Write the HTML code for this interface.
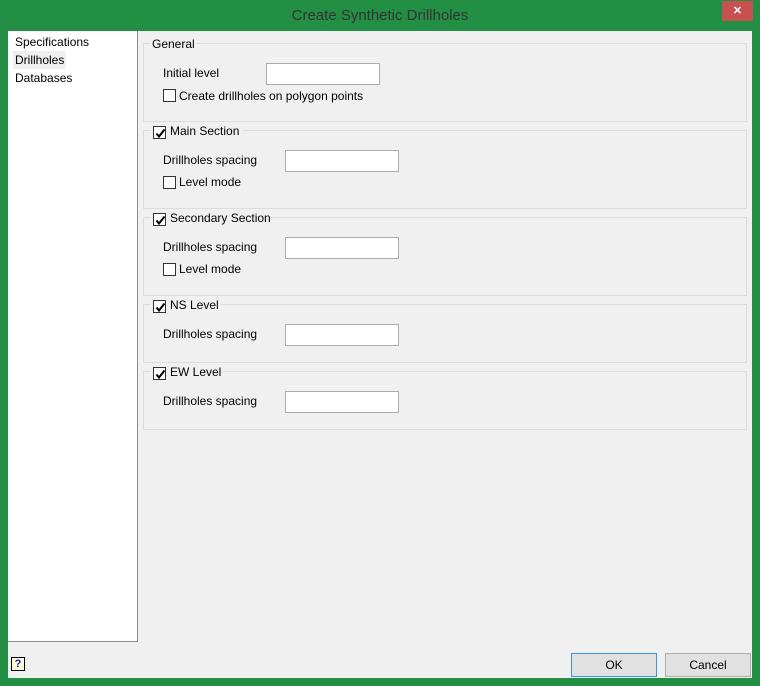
<!DOCTYPE html>
<html><head><style>
*{margin:0;padding:0;box-sizing:border-box}
body{width:760px;height:686px;background:#238f45;position:relative;overflow:hidden;font-family:"Liberation Sans",sans-serif;font-size:12px;color:#000}
.a{position:absolute}
.title{left:0;top:0;width:760px;height:31px;text-align:center;line-height:31px;font-size:15px;color:#333}
.close{left:722px;top:1px;width:31px;height:20px;background:#c75050;color:#fff;text-align:center;line-height:20px;font-size:11px;font-weight:bold}
.client{left:8px;top:31px;width:744px;height:647px;background:#f0f0f0}
.list{left:8px;top:31px;width:130px;height:611px;background:#fff;border:1px solid #8c8c96;border-top:none;border-left:none}
.grp{border:1px solid #dcdcdc;left:143px;width:604px}
.lbl{white-space:nowrap}
.inp{background:#fff;border:1px solid #acacac;width:114px;height:22px}
.cb{width:13px;height:13px;border:1px solid #333;background:#fff}
.cb svg{position:absolute;left:1px;top:1px}
.gt{background:#f0f0f0;padding:0 2px}
.btn{top:653px;width:86px;height:24px;border:1px solid #adadad;background:#e1e1e1;text-align:center;line-height:22px}
</style></head><body>
<div class="a title">Create Synthetic Drillholes</div>
<div class="a close">✕</div>
<div class="a client"></div>
<div class="a list"></div>
<div class="a" style="left:13px;top:51px;width:53px;height:18px;background:#efefef"></div>
<div class="a lbl" style="left:15px;top:35px">Specifications</div>
<div class="a lbl" style="left:15px;top:53px">Drillholes</div>
<div class="a lbl" style="left:15px;top:71px">Databases</div>

<div class="a grp" style="top:43px;height:79px"></div>
<div class="a lbl gt" style="left:150px;top:37px">General</div>
<div class="a lbl" style="left:163px;top:66px">Initial level</div>
<div class="a inp" style="left:266px;top:63px"></div>
<div class="a cb" style="left:163px;top:89px"></div>
<div class="a lbl" style="left:179px;top:89px">Create drillholes on polygon points</div>

<div class="a grp" style="top:130px;height:79px"></div>
<div class="a gt" style="left:151px;top:124px;width:92px;height:16px"></div>
<div class="a cb" style="left:153px;top:126px"><svg width="11" height="11"><path d="M1.5 5.5 L4 8.5 L9.5 1.5" stroke="#000" stroke-width="2" fill="none"/></svg></div>
<div class="a lbl" style="left:170px;top:124px">Main Section</div>
<div class="a lbl" style="left:163px;top:153px">Drillholes spacing</div>
<div class="a inp" style="left:285px;top:150px"></div>
<div class="a cb" style="left:163px;top:176px"></div>
<div class="a lbl" style="left:179px;top:175px">Level mode</div>

<div class="a grp" style="top:217px;height:79px"></div>
<div class="a gt" style="left:151px;top:211px;width:120px;height:16px"></div>
<div class="a cb" style="left:153px;top:213px"><svg width="11" height="11"><path d="M1.5 5.5 L4 8.5 L9.5 1.5" stroke="#000" stroke-width="2" fill="none"/></svg></div>
<div class="a lbl" style="left:170px;top:211px">Secondary Section</div>
<div class="a lbl" style="left:163px;top:240px">Drillholes spacing</div>
<div class="a inp" style="left:285px;top:237px"></div>
<div class="a cb" style="left:163px;top:263px"></div>
<div class="a lbl" style="left:179px;top:262px">Level mode</div>

<div class="a grp" style="top:304px;height:59px"></div>
<div class="a gt" style="left:151px;top:298px;width:70px;height:16px"></div>
<div class="a cb" style="left:153px;top:300px"><svg width="11" height="11"><path d="M1.5 5.5 L4 8.5 L9.5 1.5" stroke="#000" stroke-width="2" fill="none"/></svg></div>
<div class="a lbl" style="left:170px;top:298px">NS Level</div>
<div class="a lbl" style="left:163px;top:327px">Drillholes spacing</div>
<div class="a inp" style="left:285px;top:324px"></div>

<div class="a grp" style="top:371px;height:59px"></div>
<div class="a gt" style="left:151px;top:365px;width:70px;height:16px"></div>
<div class="a cb" style="left:153px;top:367px"><svg width="11" height="11"><path d="M1.5 5.5 L4 8.5 L9.5 1.5" stroke="#000" stroke-width="2" fill="none"/></svg></div>
<div class="a lbl" style="left:170px;top:365px">EW Level</div>
<div class="a lbl" style="left:163px;top:394px">Drillholes spacing</div>
<div class="a inp" style="left:285px;top:391px"></div>

<div class="a" style="left:11px;top:657px;width:14px;height:14px;border:1px solid #000;background:#ffffe0;color:#1a1a9a;font-size:11px;font-weight:bold;text-align:center;line-height:12px">?</div>
<div class="a btn" style="left:571px;border-color:#3c94e6">OK</div>
<div class="a btn" style="left:665px">Cancel</div>
</body></html>
